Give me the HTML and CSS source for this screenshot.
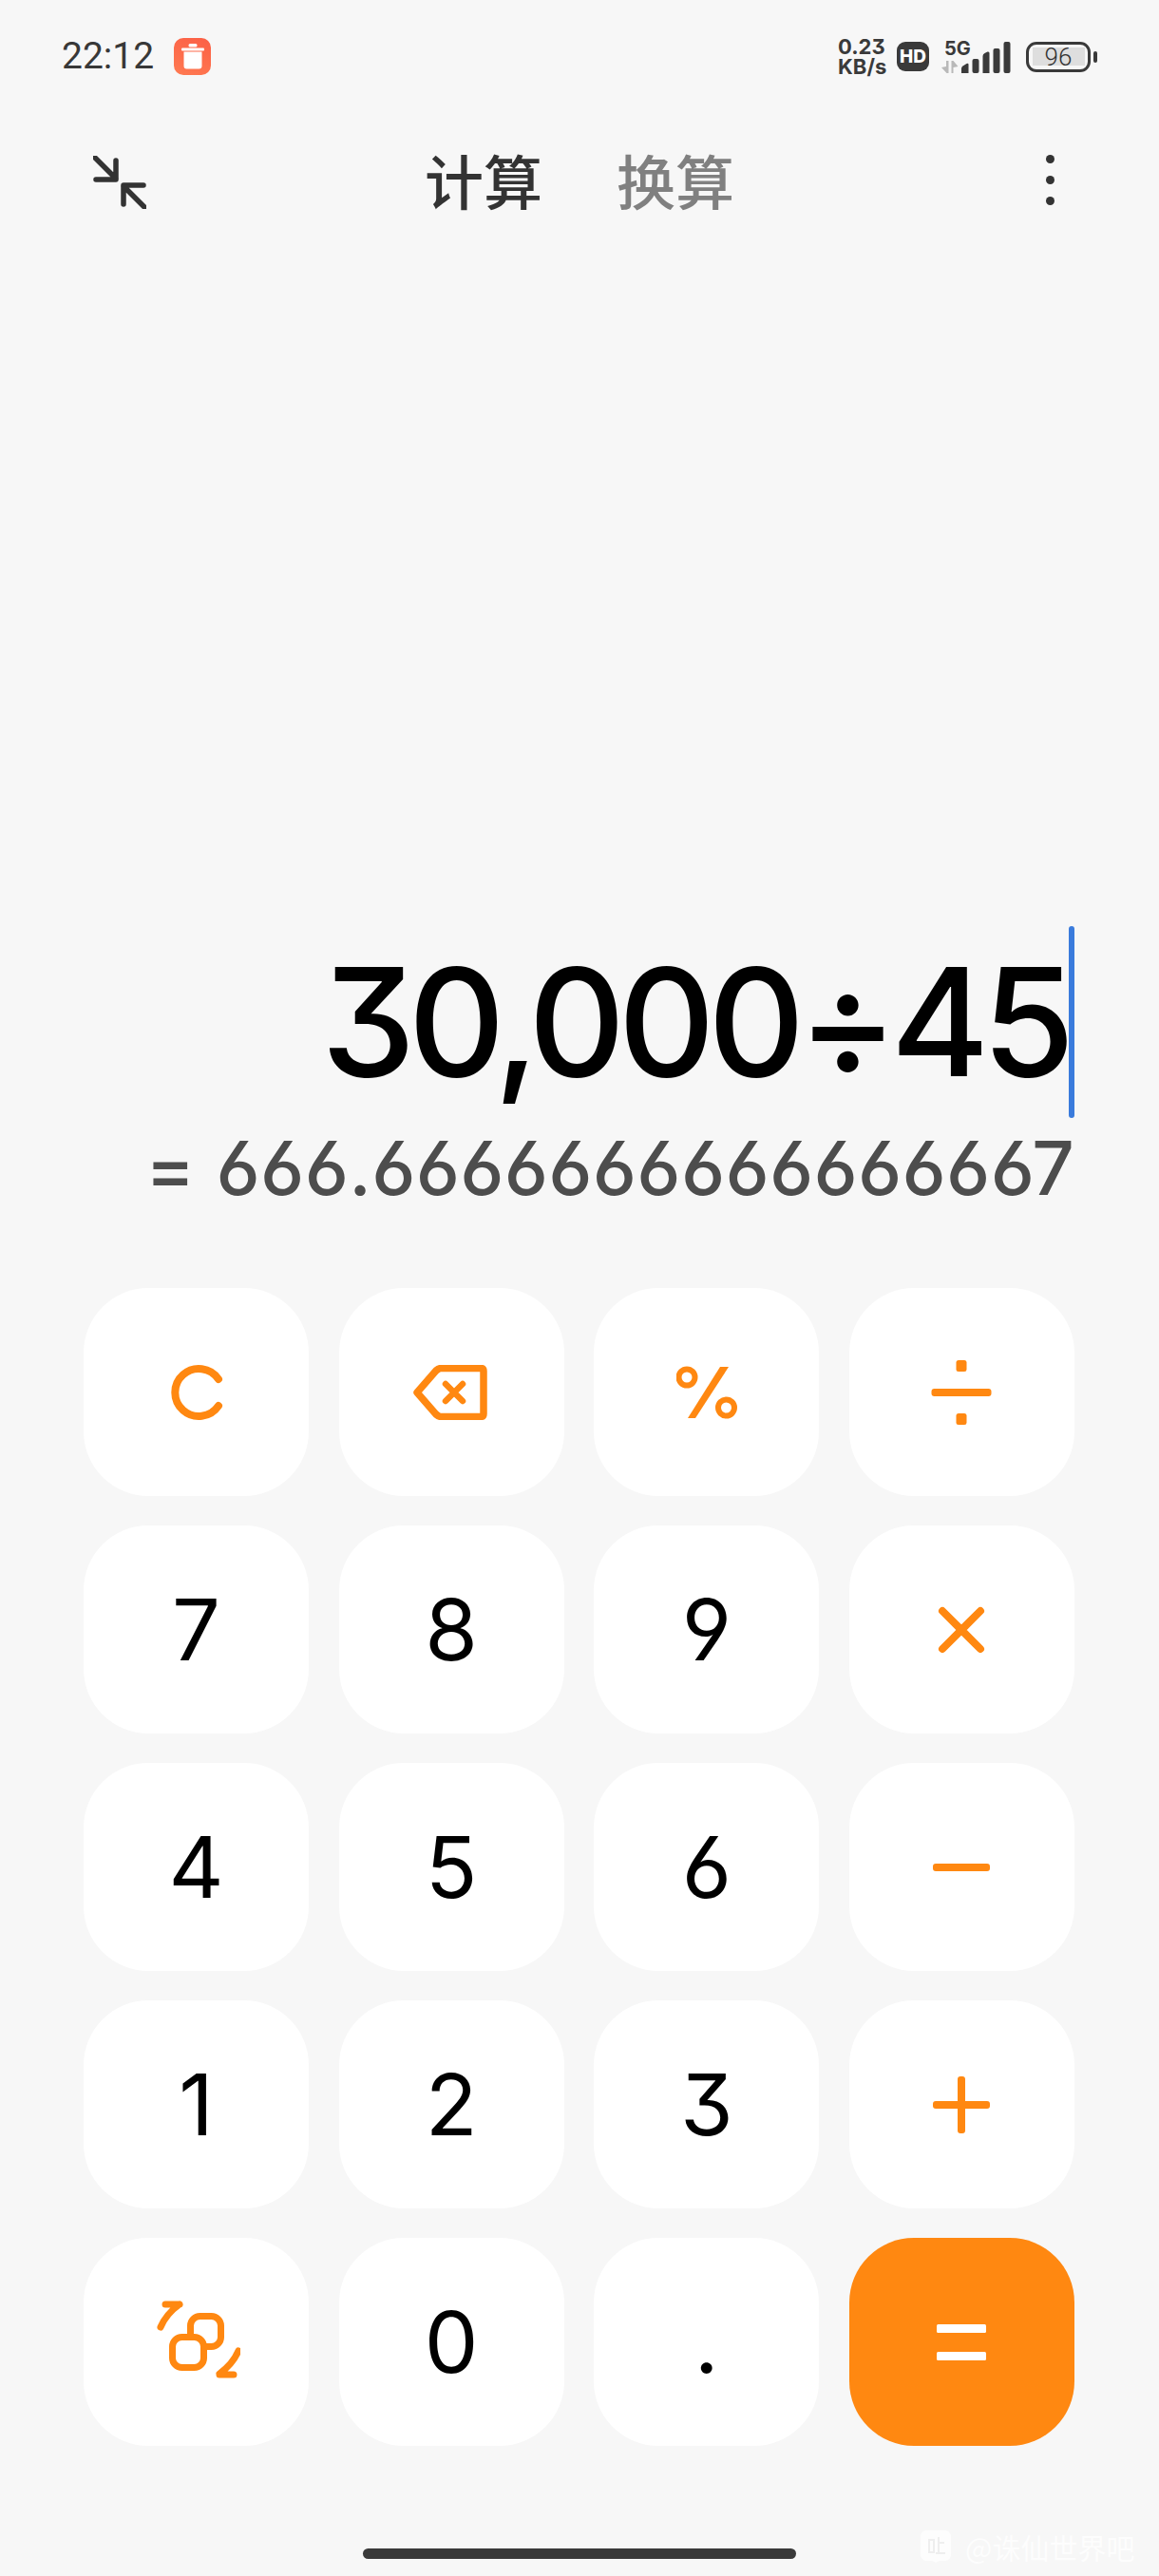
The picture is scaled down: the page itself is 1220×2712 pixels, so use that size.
FILE: index.html
```html
<!DOCTYPE html>
<html>

<head>
    <title>Calculator</title>
    <link rel="stylesheet" href="styles.css">
</head>

<body>
    <div class="app">
        <div class="status-bar">
            <div class="status-left">
                <span class="clock">22:12</span>
                <span class="trash-badge">
                    <svg width="24" height="27" viewBox="0 0 24 27">
                        <rect x="7.500" y="0" width="9" height="3.500" rx="1.500" fill="#fff" />
                        <rect x="0" y="4.500" width="24" height="3" rx="1" fill="#fff" />
                        <path d="M2.500 8.500h19v15a3 3 0 0 1-3 3h-13a3 3 0 0 1-3-3z" fill="#fff" />
                    </svg>
                </span>
            </div>
            <div class="status-right">
                <div class="net-speed">
                    <span>0.23</span>
                    <span>KB/s</span>
                </div>
                <span class="hd-badge">HD</span>
                <div class="signal">
                    <div class="signal-labels">
                        <span class="five-g">5G</span>
                        <svg width="18" height="13" viewBox="0 0 18 13">
                            <path d="M0 7l5-1V0h2.500v13h-2z M10.500 0h2l5 6-5 1v6h-2z" fill="#b9b9b9" />
                        </svg>
                    </div>
                    <svg class="signal-bars" width="52" height="33" viewBox="0 0 52 33">
                        <path d="M0 33v-5q0-1.500 1.500-2.500l4-2.500q2-1 2 1v9z" fill="#3a3a3a" />
                        <rect x="11.500" y="18" width="7" height="15" rx="2" fill="#3a3a3a" />
                        <path d="M22.500 33V15q0-2 2-3l3-1.500q2-.5 2 1.500v21z" fill="#3a3a3a" />
                        <rect x="33.500" y="7" width="7" height="26" rx="2" fill="#3a3a3a" />
                        <rect x="44.500" y="0" width="7" height="33" rx="2" fill="#3a3a3a" />
                    </svg>
                </div>
                <div class="battery">
                    <div class="battery-body">
                        <div class="battery-level">96</div>
                    </div>
                    <div class="battery-nub"></div>
                </div>
            </div>
        </div>

        <div class="top-bar">
            <svg class="shrink-icon" width="56" height="56" viewBox="0 0 56 56">
                <path d="M2 2l22 22M24 5v20H3M54 54L32 32M32 51V31h21" fill="none" stroke="#333" stroke-width="5.500" stroke-linecap="round" stroke-linejoin="round" />
            </svg>
            <div class="tabs">
                <span class="tab tab-active">计算</span>
                <span class="tab">换算</span>
            </div>
            <div class="more-dots">
                <i></i>
                <i></i>
                <i></i>
            </div>
        </div>

        <div class="display">
            <div class="expression">
                <span>30,000÷45</span>
                <span class="cursor"></span>
            </div>
            <div class="result"><span class="result-eq">=</span>666.6666666666666667</div>
        </div>

        <div class="keypad">
            <div class="key">
                <svg width="56" height="60" viewBox="0 0 56 60">
                    <path d="M51 16A25 25 0 1 0 51 44" fill="none" stroke="#ff8811" stroke-width="8" stroke-linecap="round" />
                </svg>
            </div>
            <div class="key">
                <svg width="81" height="58" viewBox="0 0 81 58">
                    <path d="M4 29L24 6q3-2.500 5-2.500h42q3 0 3 3v45q0 3-3 3H29q-2 0-5-2.500z" fill="none" stroke="#ff8811" stroke-width="7.500" stroke-linejoin="round" />
                    <path d="M34 20l18 18M52 20L34 38" fill="none" stroke="#ff8811" stroke-width="6.500" stroke-linecap="round" />
                </svg>
            </div>
            <div class="key">
                <svg width="64" height="56" viewBox="0 0 64 56">
                    <circle cx="11" cy="12" r="8.500" fill="none" stroke="#ff8811" stroke-width="6" />
                    <circle cx="52.500" cy="44" r="8.500" fill="none" stroke="#ff8811" stroke-width="6" />
                    <path d="M46 1h9L20 55h-8z" fill="#ff8811" />
                </svg>
            </div>
            <div class="key">
                <svg width="64" height="68" viewBox="0 0 64 68">
                    <rect x="26.500" y="0" width="11" height="12" rx="2.500" fill="#ff8811" />
                    <rect x="0.500" y="30" width="63" height="8" rx="3" fill="#ff8811" />
                    <rect x="26.500" y="56" width="11" height="12" rx="2.500" fill="#ff8811" />
                </svg>
            </div>

            <div class="key key-num">7</div>
            <div class="key key-num">8</div>
            <div class="key key-num">9</div>
            <div class="key">
                <svg width="50" height="50" viewBox="0 0 50 50">
                    <path d="M5 5l40 40M45 5L5 45" fill="none" stroke="#ff8811" stroke-width="8" stroke-linecap="round" />
                </svg>
            </div>

            <div class="key key-num">4</div>
            <div class="key key-num">5</div>
            <div class="key key-num">6</div>
            <div class="key">
                <svg width="60" height="8" viewBox="0 0 60 8">
                    <rect width="60" height="8" rx="3" fill="#ff8811" />
                </svg>
            </div>

            <div class="key key-num">1</div>
            <div class="key key-num">2</div>
            <div class="key key-num">3</div>
            <div class="key">
                <svg width="60" height="60" viewBox="0 0 60 60">
                    <rect y="26" width="60" height="8" rx="3" fill="#ff8811" />
                    <rect x="26" width="8" height="60" rx="3" fill="#ff8811" />
                </svg>
            </div>

            <div class="key">
                <svg width="92" height="88" viewBox="-4 0 92 88">
                    <rect x="35.500" y="16.500" width="32" height="32" rx="10" fill="none" stroke="#ff8811" stroke-width="7" />
                    <rect x="16.500" y="38.500" width="33" height="32" rx="10" fill="#fff" stroke="#ff8811" stroke-width="7" />
                    <path d="M4 28q6-14 20-24M9 4h15" fill="none" stroke="#ff8811" stroke-width="7" stroke-linecap="round" stroke-linejoin="round" />
                    <path d="M86 53q-6 14-20 24M81 78H66" fill="none" stroke="#ff8811" stroke-width="7" stroke-linecap="round" stroke-linejoin="round" />
                </svg>
            </div>
            <div class="key key-num">0</div>
            <div class="key key-num">.</div>
            <div class="key key-equals">
                <svg width="52" height="38" viewBox="0 0 52 38">
                    <rect width="52" height="9" rx="1.500" fill="#fff" />
                    <rect y="29" width="52" height="9" rx="1.500" fill="#fff" />
                </svg>
            </div>
        </div>

        <div class="home-bar"></div>

        <div class="watermark">
            <svg width="36" height="36" viewBox="0 0 36 36">
                <path d="M8 1h20a6 6 0 0 1 6 6v20a6 6 0 0 1-6 6h-6l-4 2-4-2H8a6 6 0 0 1-6-6V7a6 6 0 0 1 6-6z" fill="#fff" />
                <path d="M11 11h5v13h-5zM21 8v17M21 14h6M18 25h10" fill="none" stroke="#ececec" stroke-width="2" />
            </svg>
            <span>@诛仙世界吧</span>
        </div>
    </div>
</body>

</html>
```

FILE: styles.css
```css
* {
    box-sizing: border-box;
}

body {
    background-color: #f7f7f7;
    font-family: Inter, "Noto Sans CJK SC", sans-serif;
    font-feature-settings: "cv03", "cv04", "cv09";
    margin: 0;
    padding: 0;
}

.app {
    height: 2712px;
    overflow: hidden;
    position: relative;
    width: 1220px;
}

/* status bar */

.status-bar {
    align-items: center;
    display: flex;
    height: 79px;
    justify-content: space-between;
    padding: 40px 65px 0 65px;
}

.status-left {
    align-items: center;
    display: flex;
    gap: 20px;
}

.clock {
    color: #383838;
    font-family: Roboto, sans-serif;
    font-size: 39px;
    line-height: 39px;
    width: 98px;
}

.trash-badge {
    align-items: center;
    background: linear-gradient(20deg, #ff7a52, #fb5f45);
    border-radius: 10px;
    display: flex;
    height: 39px;
    justify-content: center;
    width: 39px;
}

.status-right {
    align-items: center;
    display: flex;
}

.net-speed {
    color: #3a3a3a;
    display: flex;
    flex-direction: column;
    font-size: 22px;
    font-weight: 700;
    line-height: 21px;
    width: 62px;
}

.hd-badge {
    align-items: center;
    background-color: #3a3a3a;
    border-radius: 9px;
    color: #fff;
    display: flex;
    font-size: 19px;
    font-weight: 800;
    height: 31px;
    justify-content: center;
    width: 34px;
}

.signal {
    align-items: flex-end;
    display: flex;
    gap: 3px;
    margin-left: 13px;
}

.signal-labels {
    display: flex;
    flex-direction: column;
    gap: 4px;
    width: 18px;
}

.five-g {
    color: #3a3a3a;
    font-size: 20px;
    font-weight: 700;
    line-height: 17px;
    margin-left: 3px;
    white-space: nowrap;
}

.battery {
    align-items: center;
    display: flex;
    gap: 3px;
    margin-left: 16px;
}

.battery-body {
    border: 3.500px solid #3a3a3a;
    border-radius: 11px;
    height: 32px;
    padding: 3.500px;
    width: 68px;
}

.battery-level {
    align-items: center;
    background-color: #dedede;
    color: #333;
    display: flex;
    font-family: Roboto, sans-serif;
    font-size: 26px;
    font-weight: 300;
    height: 100%;
    justify-content: center;
    line-height: 1;
}

.battery-nub {
    background-color: #3a3a3a;
    border-radius: 2px;
    height: 12px;
    width: 4px;
}

/* top bar with the tabs */

.top-bar {
    align-items: center;
    display: grid;
    grid-template-columns: 1fr auto 1fr;
    height: 62px;
    margin-top: 79px;
    padding: 0 110px;
}

.shrink-icon {
    margin: 6px 0 0 -12px;
}

.tabs {
    display: flex;
    gap: 78px;
}

.tab {
    color: #808080;
    font-family: "Noto Sans CJK SC", sans-serif;
    font-size: 62px;
    font-weight: 500;
    line-height: 62px;
}

.tab-active {
    color: #333;
}

.more-dots {
    display: flex;
    flex-direction: column;
    gap: 13px;
    justify-self: end;
}

.more-dots i {
    background-color: #333;
    border-radius: 50%;
    display: block;
    height: 9px;
    width: 9px;
}

/* expression and result */

.display {
    align-items: flex-end;
    display: flex;
    flex-direction: column;
    margin-top: 755px;
    padding-right: 89px;
}

.expression {
    align-items: center;
    color: #000;
    display: flex;
    font-size: 158px;
    font-weight: 500;
    height: 202px;
    letter-spacing: -7.500px;
    line-height: 202px;
}

.cursor {
    background-color: #3a7bdc;
    border-radius: 3px;
    display: block;
    height: 202px;
    margin-left: 1px;
    width: 6px;
}

.result {
    color: #4d4d4d;
    font-size: 78px;
    font-weight: 500;
    letter-spacing: 0.300px;
    line-height: 90px;
    margin-top: 8px;
}

.result-eq {
    margin-right: 22px;
}

/* keys */

.keypad {
    display: grid;
    gap: 31px 31.500px;
    grid-template-columns: repeat(4, 1fr);
    grid-auto-rows: 219px;
    margin-top: 81px;
    padding: 0 89px 0 88px;
}

.key {
    align-items: center;
    background-color: #fff;
    border-radius: 68px;
    color: #000;
    display: flex;
    justify-content: center;
}

.key-num {
    font-size: 90px;
    font-weight: 400;
}

.key-equals {
    background-color: #ff8811;
}

.home-bar {
    background-color: #3a3a3a;
    border-radius: 6px;
    height: 11px;
    margin: 108px auto 0;
    width: 456px;
}

.watermark {
    align-items: center;
    color: #fff;
    display: flex;
    font-family: "Noto Sans CJK SC", sans-serif;
    font-size: 30px;
    gap: 13px;
    left: 967px;
    opacity: 0.75;
    position: absolute;
    top: 2659px;
}
```
